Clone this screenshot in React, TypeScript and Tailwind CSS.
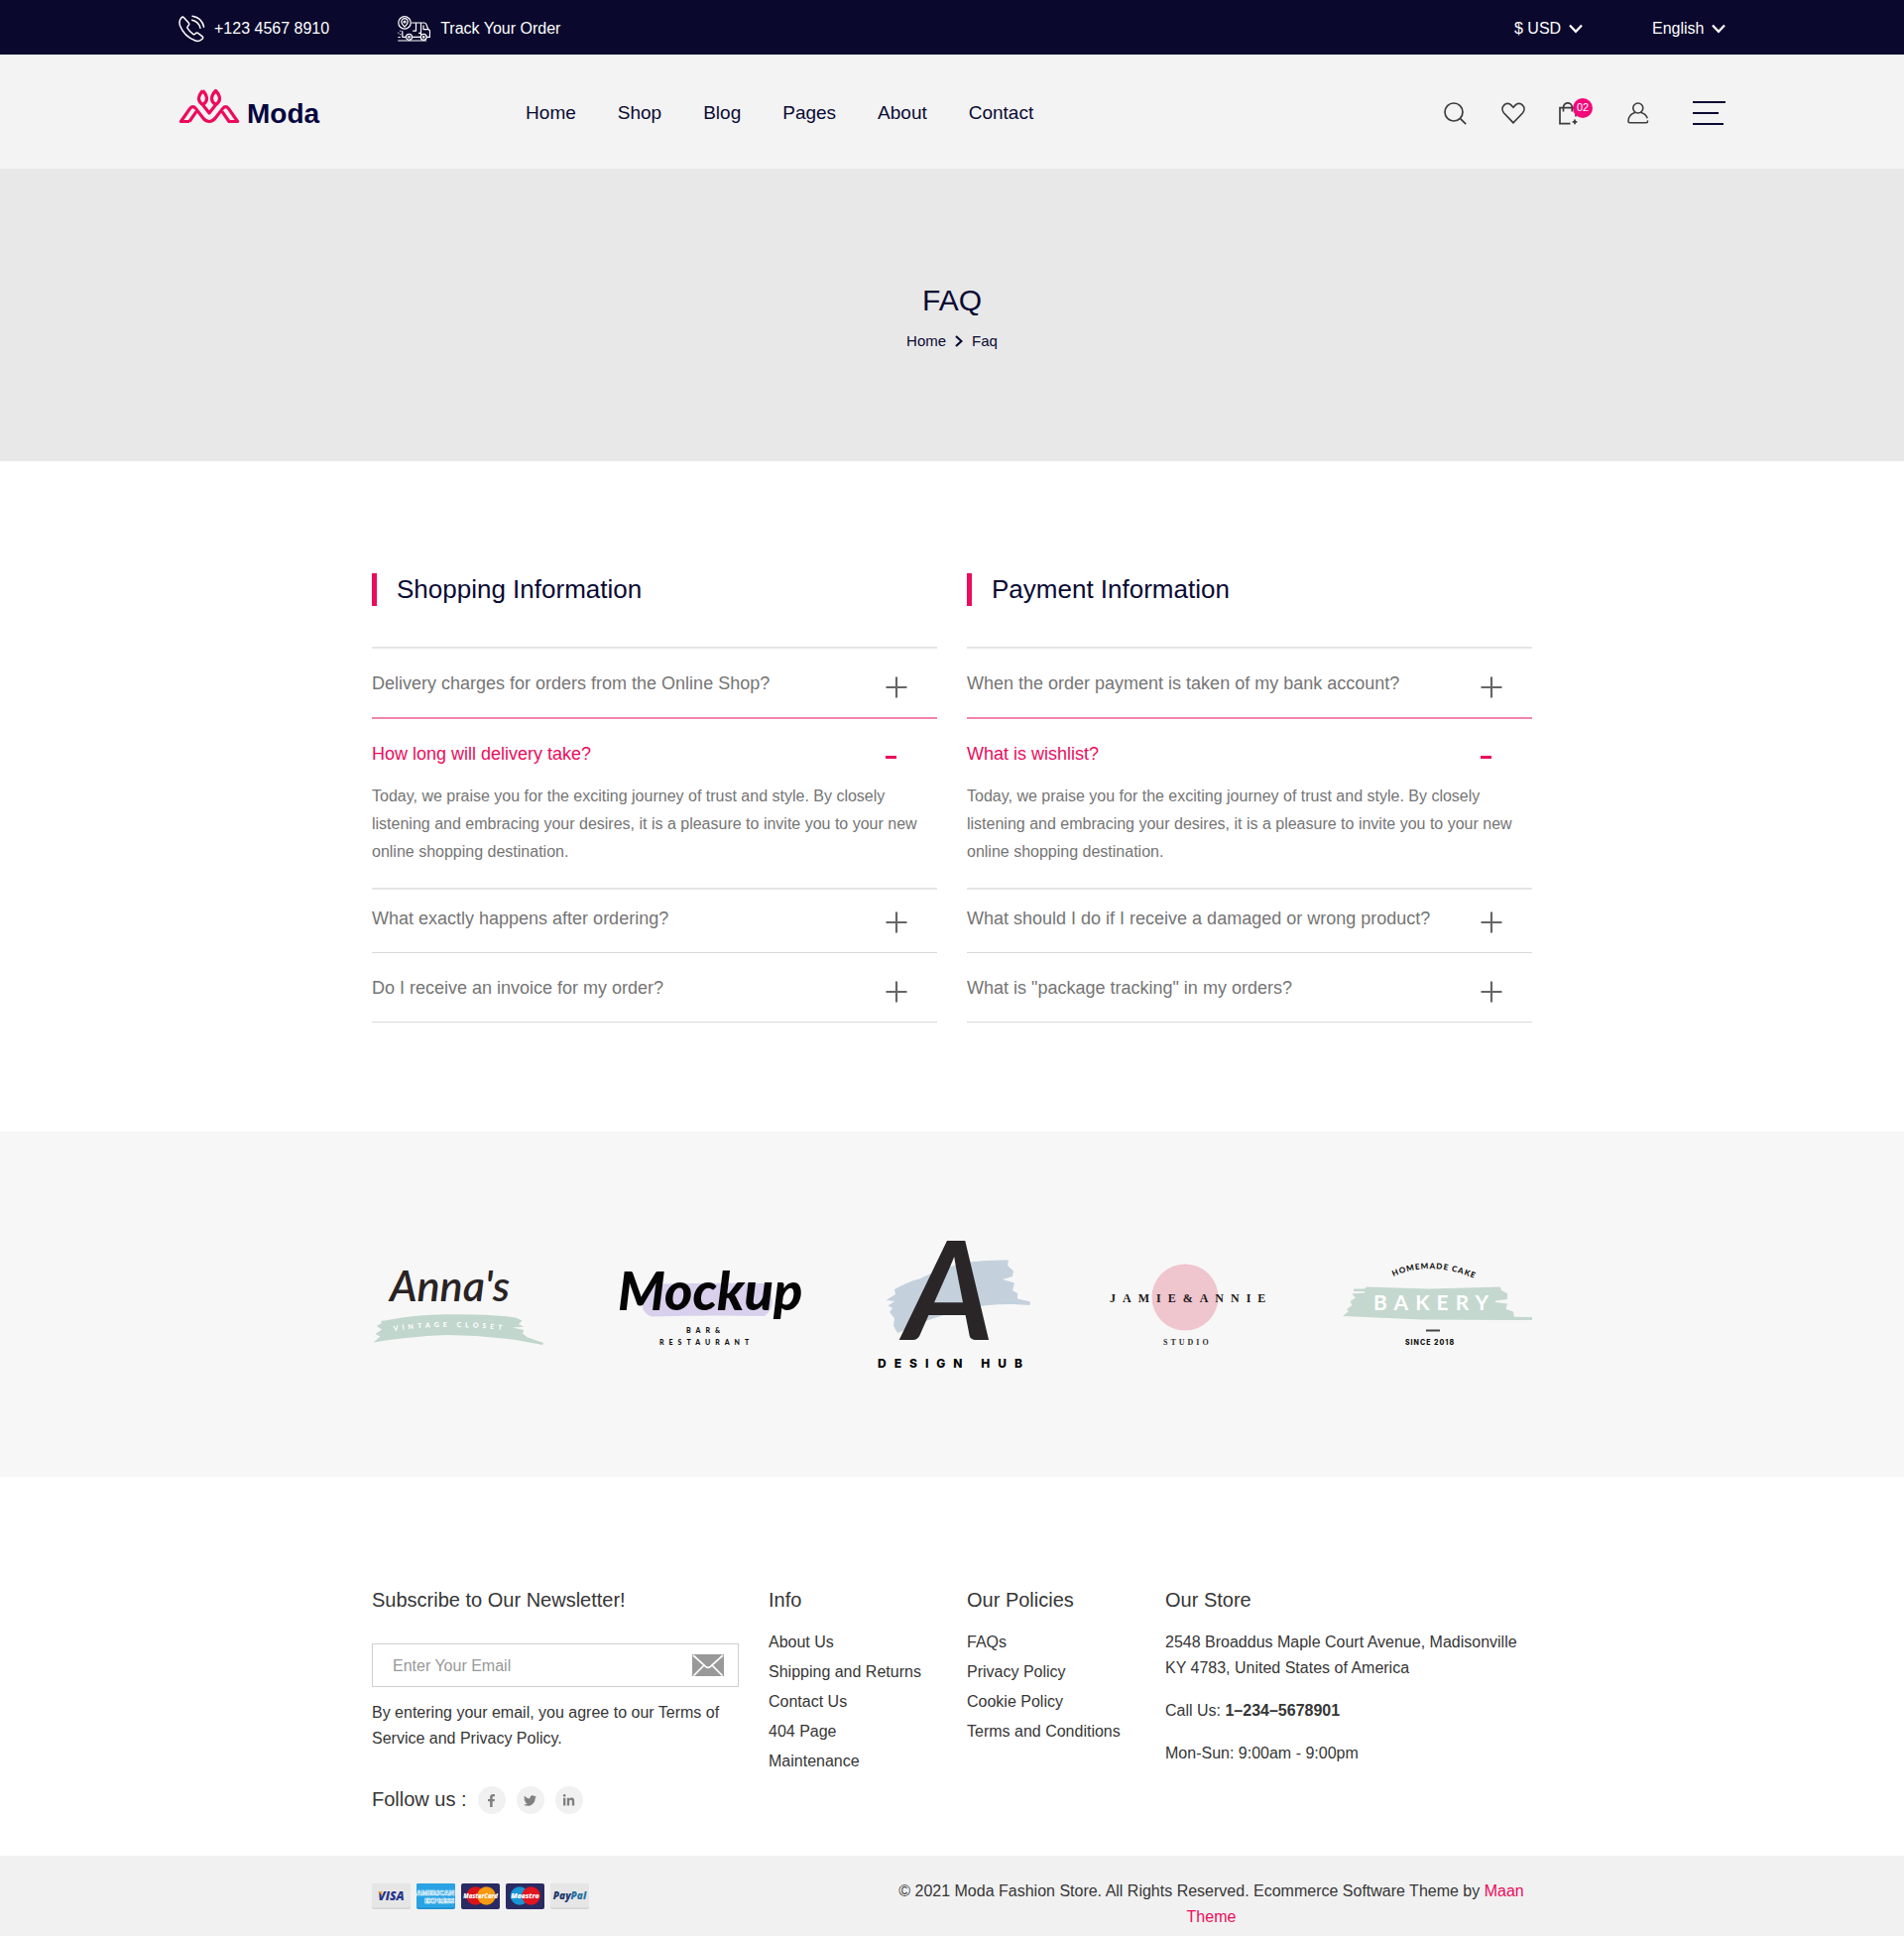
import { useState } from "react";
import type { ReactNode } from "react";
import { FaFacebookF, FaLinkedinIn, FaTwitter } from "react-icons/fa";

function PhoneIcon() {
  return (
    <svg width="27" height="28" viewBox="0 0 27 28" fill="none" stroke="currentColor" strokeWidth="1.5" strokeLinecap="round" strokeLinejoin="round" aria-hidden="true">
      <path d="M5.2 2.4 10.2 8q1.2 1.4-.2 2.8-1.6 1.6-.8 2.8 2.3 3.6 5.8 6 1 .6 2.2-.8 1.4-1.4 2.8-.2l4.2 3.2q1 1.2-.2 2.4-3 3.2-7 1.8Q5.5 21.700 1.500 10.800.2 6 2.600 3.200 4 1.600 5.200 2.400Z" />
      <path d="M14 1.200q9.600 1.400 11.600 11M13.600 5.200q6.600 1.200 8.400 8" />
    </svg>
  );
}

function TruckIcon() {
  return (
    <svg width="33" height="26" viewBox="0 0 33 26" fill="none" stroke="currentColor" strokeWidth="1.200" strokeLinecap="round" strokeLinejoin="round" aria-hidden="true">
      <circle cx="7" cy="6.900" r="6.200" />
      <path d="M7 11C4.700 8.600 3.800 7.300 3.800 5.900a3.200 3.200 0 0 1 6.400 0C10.200 7.300 9.300 8.600 7 11Z" />
      <circle cx="7" cy="6" r="1" />
      <path d="M14.600 7h8.900v11.500M18.500 7v8.200h-2.800M4.800 15.500v5.800h3.400M14.800 21.300h7.800M23.500 7h3.300q1.400.1 2.100 1.600l1.800 4.600 1.800 1.800v6.300h-3M26 9.800v3.800h4.400M23.500 17.300h-2" />
      <circle cx="11.500" cy="21.300" r="3" />
      <circle cx="11.500" cy="21.300" r=".8" />
      <circle cx="26.200" cy="21.300" r="3" />
      <circle cx="26.200" cy="21.300" r=".8" />
      <path d="M.7 25h28M.8 17v.2M2.800 15v.2M2.800 18.500v.2M.8 21.500h1.500" />
    </svg>
  );
}

function ChevronDown() {
  return (
    <svg className="pointer-events-none" width="14" height="10" viewBox="0 0 14 10" fill="none" stroke="currentColor" strokeWidth="2.200" aria-hidden="true">
      <path d="m1 1.500 6 6.300 6-6.300" />
    </svg>
  );
}

function LogoMark() {
  return (
    <svg width="63" height="36" viewBox="0 0 63 36" fill="none" stroke="#ec0b5c" strokeWidth="3.200" strokeLinejoin="round" aria-hidden="true">
      <path d="M11 33.500H2.400L11.600 20.400q2.800-3.600 5.800 0l7.200 9.400q2.800 3.700 6.400 3.700t6.400-3.700l7.200-9.400q3-3.600 5.800 0L59.600 33.500H51l-7.800-11.200M11 33.500l7.800-11.200" />
      <path d="M24.500 2.400q-4 4.400-4 8.100 0 3.300 4 6.300l6.500 8.200 6.500-8.200q4-3 4-6.300 0-3.700-4-8.100-4 4.400-4 8.100 0 3.300 4 6.300M24.500 2.400q4 4.400 4 8.100 0 3.300-4 6.300" />
    </svg>
  );
}

function SearchIcon() {
  return (
    <svg width="23" height="23" viewBox="0 0 23 23" fill="none" stroke="currentColor" strokeWidth="1.700" aria-hidden="true">
      <circle cx="10" cy="10" r="9" />
      <path d="m16.600 16.600 5.600 5.600" />
    </svg>
  );
}

function HeartIcon() {
  return (
    <svg width="24" height="22" viewBox="0 0 24 22" fill="none" stroke="currentColor" strokeWidth="1.700" aria-hidden="true">
      <path d="M12 20.800 2.600 11C.5 8.600.5 5.300 2.600 3.100c2-2.200 5.400-2.200 7.400 0l2 2.200 2-2.200c2-2.200 5.400-2.200 7.400 0 2.100 2.200 2.100 5.500 0 7.900Z" />
    </svg>
  );
}

function BagIcon() {
  return (
    <svg width="22" height="23" viewBox="0 0 22 23" fill="none" stroke="currentColor" strokeWidth="1.700" aria-hidden="true">
      <path d="M11.500 21.600H1V5.600h16v9M4.500 9.500V5.200a4.400 4.400 0 0 1 8.800 0v4.300" />
      <path d="M16 17.600v4.600M13.700 19.900h4.600" strokeWidth="1.800" />
    </svg>
  );
}

function UserIcon() {
  return (
    <svg width="22" height="22" viewBox="0 0 22 22" fill="none" stroke="currentColor" strokeWidth="1.600" strokeLinecap="round" aria-hidden="true">
      <circle cx="10.800" cy="6" r="5" />
      <path d="M7.600 10.400C3.500 11.800 1 14.800 1 19.200q0 1.600 1.500 1.600h16.600q1.400 0 1.400-1.800M14 10.400q4.400 1.300 6 5.200" />
    </svg>
  );
}

function EnvelopeIcon() {
  return (
    <svg width="32" height="22" viewBox="0 0 32 22" aria-hidden="true">
      <path d="M0 0h32v22H0Z" fill="#999" />
      <path d="m1 1 12.600 11.300q2.400 2 4.800 0L31 1M1.500 21.500 12 11M30.500 21.500 20 11" fill="none" stroke="#fff" strokeWidth="1.700" />
    </svg>
  );
}

function TopSelect({ label, value }: { label: string; value: string }) {
  return (
    <div className="flex items-center gap-[7px]">
      <select aria-label={label} className="h-7 appearance-none bg-transparent text-base leading-7 outline-none" defaultValue={value}>
        <option value={value}>{value}</option>
      </select>
      <ChevronDown />
    </div>
  );
}

const navItems = ["Home", "Shop", "Blog", "Pages", "About", "Contact"];

function TopBar() {
  return (
    <div className="bg-[#0a092d] text-white">
      <div className="mx-auto flex h-[55px] max-w-[1560px] items-center pt-[2px] text-base">
        <a href="#phone" className="flex items-center gap-[9px]">
          <PhoneIcon />
          +123 4567 8910
        </a>
        <a href="#track" className="ml-[69px] flex items-center gap-[10px]">
          <TruckIcon />
          Track Your Order
        </a>
        <div className="ml-auto flex items-center gap-[70px]">
          <TopSelect label="Currency" value="$ USD" />
          <TopSelect label="Language" value="English" />
        </div>
      </div>
    </div>
  );
}

function Header() {
  return (
    <header className="bg-[#f3f3f3]">
      <div className="mx-auto flex h-[115px] max-w-[1560px] items-center pt-[3px]">
        <a href="#home" className="mr-52 flex items-end gap-[6px] pb-[14px]" aria-label="Moda home">
          <LogoMark />
          <span className="text-[28px] leading-5 font-bold text-[#06063f]">Moda</span>
        </a>
        <nav className="flex gap-[42px] text-[19px] text-[#0a0a33]">
          {navItems.map((item) => (
            <a key={item} href={`#${item.toLowerCase()}`}>{item}</a>
          ))}
        </nav>
        <div className="ml-auto flex items-center text-[#3d3d3d]">
          <button type="button" aria-label="Search" className="mr-[35px]"><SearchIcon /></button>
          <button type="button" aria-label="Wishlist" className="mr-[34px]"><HeartIcon /></button>
          <button type="button" aria-label="Cart" className="relative mr-[47px]">
            <BagIcon />
            <span className="absolute -top-1 left-[14px] flex size-5 items-center justify-center rounded-full bg-[#f5087a] text-[11px] leading-none text-white">02</span>
          </button>
          <button type="button" aria-label="Account" className="mr-[44px]"><UserIcon /></button>
          <button type="button" aria-label="Menu" className="flex w-[33px] flex-col gap-[9px]">
            <span className="h-[2px] w-full bg-[#0a0a33]" />
            <span className="h-[2px] w-[26px] bg-[#0a0a33]" />
            <span className="h-[2px] w-[31px] bg-[#0a0a33]" />
          </button>
        </div>
      </div>
    </header>
  );
}

function Banner() {
  return (
    <section className="flex flex-col items-center bg-[#e8e8e8] pt-[113px] pb-[109px] text-[#0a0a33]">
      <h1 className="text-[30px] leading-10">FAQ</h1>
      <nav aria-label="Breadcrumb" className="mt-[9px] flex items-center gap-[9px] text-[15px] leading-6">
        <a href="#home">Home</a>
        <svg width="8" height="12" viewBox="0 0 8 12" fill="none" stroke="currentColor" strokeWidth="2.200" aria-hidden="true">
          <path d="m1 1 5.500 5L1 11" />
        </svg>
        <span>Faq</span>
      </nav>
    </section>
  );
}

const answer =
  "Today, we praise you for the exciting journey of trust and style. By closely listening and embracing your desires, it is a pleasure to invite you to your new online shopping destination.";

const faqGroups = [
  {
    title: "Shopping Information",
    questions: [
      "Delivery charges for orders from the Online Shop?",
      "How long will delivery take?",
      "What exactly happens after ordering?",
      "Do I receive an invoice for my order?",
    ],
  },
  {
    title: "Payment Information",
    questions: [
      "When the order payment is taken of my bank account?",
      "What is wishlist?",
      "What should I do if I receive a damaged or wrong product?",
      'What is "package tracking" in my orders?',
    ],
  },
];

const itemBorders = ["border-t-2", "border-t-2", "border-t-2", "border-y"];
const itemColors = ["border-[#e5e5e5]", "border-[#e5e5e5]", "border-[#e5e5e5]", "border-[#d9d9d9]"];
const itemPaddings = ["pt-[21px] pb-[19px]", "pt-[21px] pb-[19px]", "pt-[15px] pb-[19px]", "pt-[21px] pb-[19px]"];

function FaqGroup({ title, questions }: { title: string; questions: string[] }) {
  const [open, setOpen] = useState(1);
  return (
    <section>
      <h2 className="border-l-[5px] border-[#ec0b5c] pl-5 text-[26px] leading-[33px] text-[#0a0a33]">{title}</h2>
      <div className="mt-[41px]">
        {questions.map((question, i) => {
          const active = open === i;
          return (
            <div key={question} className={`${itemBorders[i]} ${active ? "border-[#f285ab]" : itemColors[i]}`}>
              <button
                type="button"
                aria-expanded={active}
                onClick={() => setOpen(active ? -1 : i)}
                className={`flex w-full items-center justify-between text-left text-lg leading-[29px] ${active ? "pt-[21px] text-[#ec0b5c]" : `${itemPaddings[i]} text-[#757575]`}`}
              >
                {question}
                <svg className="mr-[30px] shrink-0" width="22" height="29" viewBox="0 0 22 29" fill="none" stroke="currentColor" aria-hidden="true">
                  {active ? <path d="M0 17.500h11" strokeWidth="3" /> : <path d="M.5 18h21M11 7.500v21" stroke="#666" strokeWidth="2.200" />}
                </svg>
              </button>
              {active && <p className="pt-[14px] pb-[22px] text-base leading-7 text-[#757575]">{answer}</p>}
            </div>
          );
        })}
      </div>
    </section>
  );
}

function Brands() {
  return (
    <section className="bg-[#f7f7f7] py-[109px]" aria-label="Brands">
      <div className="mx-auto flex max-w-[1170px] items-center justify-between">
        <svg width="173" height="84" viewBox="0 0 173 84" overflow="visible" role="img" aria-label="Anna's Vintage Closet">
          <path fill="#c1d6cd" d="M16 58Q45 52.500 75 52.300 120 51.500 145 55.500L151.500 58.500 148 62 153 64.700 141.500 65.500 153 68 152 71.500 157 75.500 173 81 172 83 145 78Q110 73 75 73 36 74.500 1.500 80.500L8.500 74.500 3.500 72 10 67.500 5 64 10 61 9 59Z" />
          <path id="anna-curve" d="M22 69Q78 61 140 69" fill="none" />
          <text className="font-['Lato',sans-serif] text-[43px] font-semibold italic" x="18" y="39" fill="#292324">Anna's</text>
          <text className="font-['Lato',sans-serif] text-[7px] font-black tracking-[4px]" fill="#fff">
            <textPath href="#anna-curve">VINTAGE CLOSET</textPath>
          </text>
        </svg>
        <svg width="185" height="84" viewBox="0 0 185 84" overflow="visible" role="img" aria-label="Mockup Bar and Restaurant">
          <path fill="#d9d0ed" d="M34 22Q80 20 146 21 156 24 155 35 158 46 148 54 90 53 34 54.500 24 51 25 42 24 27 34 22Z" />
          <text className="font-['Lato',sans-serif] text-[54px] font-black italic" x="0" y="48" fill="#050505">Mockup</text>
          <text className="font-['Lato',sans-serif] text-[7px] font-black tracking-[5px]" x="69" y="71" fill="#111">BAR&amp;</text>
          <text className="font-['Lato',sans-serif] text-[7px] font-black tracking-[5px]" x="42" y="83" fill="#111">RESTAURANT</text>
        </svg>
        <svg width="158" height="130" viewBox="0 0 158 130" overflow="visible" role="img" aria-label="A Design Hub">
          <path fill="#c4d1dd" d="M18 50Q32 42 43 39.500 66 28 93 22.500 114 20 133 20.500L132 26 138 31.500 137 37 127 40 139 43.500 137 51 142 54 142 59.500 155 62.500 154.500 66 138 65Q112 65 96 68.500 56 78 38 87L21 94 17 87 18 79 13 73 16 69 11.500 66.500 18 62 9.500 61 19 55Z" />
          <text className="font-['Lato',sans-serif] text-[138px] font-bold italic" x="73" y="101" textAnchor="middle" fill="#2a2526">A</text>
          <text className="font-['Inter',sans-serif] text-[12px] font-extrabold tracking-[8px]" x="1" y="129" fill="#050505">DESIGN HUB</text>
        </svg>
        <svg width="162" height="84" viewBox="0 0 162 84" overflow="visible" role="img" aria-label="Jamie and Annie Studio">
          <circle cx="78" cy="35" r="33.500" fill="#efc5ce" />
          <text className="font-['Liberation_Serif',serif] text-[12px] font-bold tracking-[7px]" x="2" y="40" fill="#1e1a1b">JAMIE&amp;ANNIE</text>
          <text className="font-['Liberation_Serif',serif] text-[8px] font-bold tracking-[3px]" x="56" y="83" fill="#333">STUDIO</text>
        </svg>
        <svg width="191" height="84" viewBox="0 0 191 84" overflow="visible" role="img" aria-label="Homemade Cake Bakery since 2018">
          <path fill="#c4d8cf" d="M24 24.500 86 26.500 159 24.500 160 28 166 31 166 37 154 38.500 154 40 166 41.500 164.500 47 172 49.500 173 54.700 191 55V58L80 57.500 0 54 6 49 4 47 9.500 43 7.500 39 13 35.500 9 31.500 22 30.500 22 29 11 29V26.500H22Z" />
          <path id="bakery-curve" d="M51 14Q90-3 135 17" fill="none" />
          <text className="font-['Lato',sans-serif] text-[8px] font-black tracking-[1px]" fill="#111">
            <textPath href="#bakery-curve">HOMEMADE CAKE</textPath>
          </text>
          <text className="font-['Lato',sans-serif] text-[21px] font-bold tracking-[7px]" x="31" y="48" fill="#fff">BAKERY</text>
          <path d="M84 68.500h14" stroke="#444" strokeWidth="2" />
          <text className="font-['Inter',sans-serif] text-[7px] font-extrabold tracking-[1px]" x="63" y="83" fill="#111">SINCE 2018</text>
        </svg>
      </div>
    </section>
  );
}

function FooterLinks({ title, links }: { title: string; links: string[] }) {
  return (
    <div>
      <h3 className="text-xl leading-7">{title}</h3>
      <ul className="mt-[14px] text-base leading-[30px]">
        {links.map((link) => (
          <li key={link}><a href="#link">{link}</a></li>
        ))}
      </ul>
    </div>
  );
}

function Social({ label, children }: { label: string; children: ReactNode }) {
  return (
    <a href="#social" aria-label={label} className="flex size-7 items-center justify-center rounded-full bg-[#f1f1f1] text-[13px] text-[#808080]">
      {children}
    </a>
  );
}

function PaymentCards() {
  const lettering = "font-['Open_Sans',sans-serif] font-extrabold";
  return (
    <div className="flex gap-[6px]">
      <svg width="39" height="26" viewBox="0 0 39 26" role="img" aria-label="Visa">
        <rect width="39" height="26" rx="2" fill="#d5d5d5" />
        <rect width="39" height="24.500" rx="2" fill="#e6e6e6" />
        <text className={`${lettering} text-[12px] italic`} x="19.500" y="17" textAnchor="middle" fill="#26338a">VISA</text>
        <path d="M6 8h3.500l1.500 4.500Z" fill="#f2a32c" />
      </svg>
      <svg width="39" height="26" viewBox="0 0 39 26" role="img" aria-label="American Express">
        <rect width="39" height="26" rx="2" fill="#1d8fd0" />
        <rect width="39" height="24.500" rx="2" fill="#29a3e3" />
        <text className={`${lettering} text-[7px]`} x="0" y="12" fill="#29a3e3" stroke="#fff" strokeWidth=".6">AMERICAN</text>
        <text className={`${lettering} text-[7px]`} x="8" y="20" fill="#29a3e3" stroke="#fff" strokeWidth=".6">EXPRESS</text>
      </svg>
      <svg width="39" height="26" viewBox="0 0 39 26" role="img" aria-label="MasterCard">
        <rect width="39" height="26" rx="2" fill="#2a2b63" />
        <circle cx="14.500" cy="12.500" r="9.300" fill="#d9151b" />
        <circle cx="25.500" cy="12.500" r="9.300" fill="#f59a13" />
        <text className={`${lettering} text-[6px] italic`} x="19.500" y="14.800" textAnchor="middle" fill="#fff">MasterCard</text>
      </svg>
      <svg width="39" height="26" viewBox="0 0 39 26" role="img" aria-label="Maestro">
        <rect width="39" height="26" rx="2" fill="#2a2b63" />
        <circle cx="14" cy="12.500" r="9.300" fill="#1796d3" />
        <circle cx="25.500" cy="12.500" r="9.300" fill="#e3151f" />
        <text className={`${lettering} text-[7px] italic`} x="19.500" y="15" textAnchor="middle" fill="#fff">Maestro</text>
      </svg>
      <svg width="39" height="26" viewBox="0 0 39 26" role="img" aria-label="PayPal">
        <rect width="39" height="26" rx="2" fill="#d5d5d5" />
        <rect width="39" height="24.500" rx="2" fill="#e6e6e6" />
        <text className={`${lettering} text-[10px] italic`} x="19.500" y="16" textAnchor="middle" fill="#1e3a6c">
          Pay<tspan fill="#28719f">Pal</tspan>
        </text>
      </svg>
    </div>
  );
}

function Footer() {
  return (
    <footer className="text-[#363636]">
      <div className="mx-auto grid max-w-[1170px] grid-cols-[370fr_170fr_170fr_370fr] gap-[30px] pt-[110px] pb-[42px]">
        <div>
          <h3 className="text-xl leading-7">Subscribe to Our Newsletter!</h3>
          <form className="mt-[30px] flex h-11 items-center border border-[#cfcfcf] pr-[14px] pl-5" onSubmit={(e) => e.preventDefault()}>
            <input type="email" aria-label="Email" placeholder="Enter Your Email" className="min-w-0 flex-1 pt-[2px] text-base outline-none placeholder:text-[#999]" />
            <button type="submit" aria-label="Subscribe"><EnvelopeIcon /></button>
          </form>
          <p className="mt-[13px] text-base leading-[26px]">By entering your email, you agree to our Terms of Service and Privacy Policy.</p>
          <div className="mt-[35px] flex items-center gap-[11px]">
            <span className="pb-[2px] text-xl leading-[26px]">Follow us :</span>
            <Social label="Facebook"><FaFacebookF /></Social>
            <Social label="Twitter"><FaTwitter /></Social>
            <Social label="LinkedIn"><FaLinkedinIn /></Social>
          </div>
        </div>
        <FooterLinks title="Info" links={["About Us", "Shipping and Returns", "Contact Us", "404 Page", "Maintenance"]} />
        <FooterLinks title="Our Policies" links={["FAQs", "Privacy Policy", "Cookie Policy", "Terms and Conditions"]} />
        <div>
          <h3 className="text-xl leading-7">Our Store</h3>
          <div className="mt-4 flex flex-col gap-[17px] text-base leading-[26px]">
            <p>2548 Broaddus Maple Court Avenue, Madisonville KY 4783, United States of America</p>
            <p>Call Us: <strong className="font-bold">1–234–5678901</strong></p>
            <p>Mon-Sun: 9:00am - 9:00pm</p>
          </div>
        </div>
      </div>
      <div className="bg-[#f1f1f1] pt-[23px] pb-[6px]">
        <div className="mx-auto flex max-w-[1170px] items-start justify-between">
          <div className="pt-[5px]"><PaymentCards /></div>
          <p className="max-w-[647px] text-center text-base leading-[26px]">
            © 2021 Moda Fashion Store. All Rights Reserved. Ecommerce Software Theme by{" "}
            <a href="#maan" className="text-[#ec0b5c]">Maan Theme</a>
          </p>
        </div>
      </div>
    </footer>
  );
}

export default function App() {
  return (
    <div className="bg-white font-['Liberation_Sans',Arial,sans-serif]">
      <TopBar />
      <Header />
      <Banner />
      <main>
        <div className="mx-auto grid max-w-[1170px] grid-cols-2 gap-[30px] pt-[113px] pb-[110px]">
          {faqGroups.map((group) => (
            <FaqGroup key={group.title} title={group.title} questions={group.questions} />
          ))}
        </div>
        <Brands />
      </main>
      <Footer />
    </div>
  );
}
